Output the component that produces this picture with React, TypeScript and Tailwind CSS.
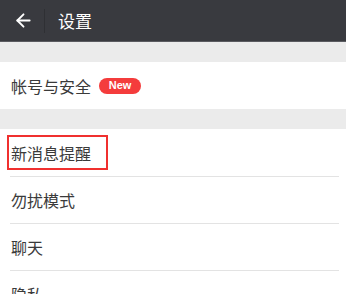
import { ArrowLeft } from "lucide-react";

const rows = ["勿扰模式", "聊天", "隐私"];

export default function App() {
  return (
    <div
      className="h-[294px] w-[346px] overflow-hidden bg-[#ebebeb]"
      style={{ fontFamily: '"Noto Sans CJK SC", "Noto Sans", sans-serif' }}
    >
      {/* header */}
      <div className="flex h-[42px] items-center bg-[#393a3f] border-b border-[#5a5b60]">
        <div className="flex w-[44px] justify-center pl-[2px]">
          <ArrowLeft size={21} strokeWidth={2.2} color="#ffffff" />
        </div>
        <div className="h-[24px] w-px bg-[#2f3034]" />
        <span className="ml-[13px] text-[17px] text-white">设置</span>
      </div>

      <div className="mt-[20px] flex h-[47px] items-center bg-white pl-[11px]">
        <span className="text-[16px] text-[#3a3a3a]">帐号与安全</span>
        <span
          className="ml-[8px] flex h-[16px] w-[42px] items-center justify-center rounded-full bg-[#f43c3c] text-[11px] font-bold leading-none text-white"
          style={{ fontFamily: '"Liberation Sans", sans-serif' }}
        >
          New
        </span>
      </div>

      <div className="mt-[20px] bg-white">
        <div className="flex h-[47px] items-center pl-[7px]">
          <div className="flex h-[35px] w-[101px] items-center border-2 border-[#f0302f] pl-[2px]">
            <span className="text-[16px] text-[#3a3a3a]">新消息提醒</span>
          </div>
        </div>
        {rows.map((r) => (
          <div key={r} className="ml-[10px] mr-[7px] flex h-[47px] items-center border-t border-[#e3e3e3] pl-px">
            <span className="text-[16px] text-[#3a3a3a]">{r}</span>
          </div>
        ))}
      </div>
    </div>
  );
}
